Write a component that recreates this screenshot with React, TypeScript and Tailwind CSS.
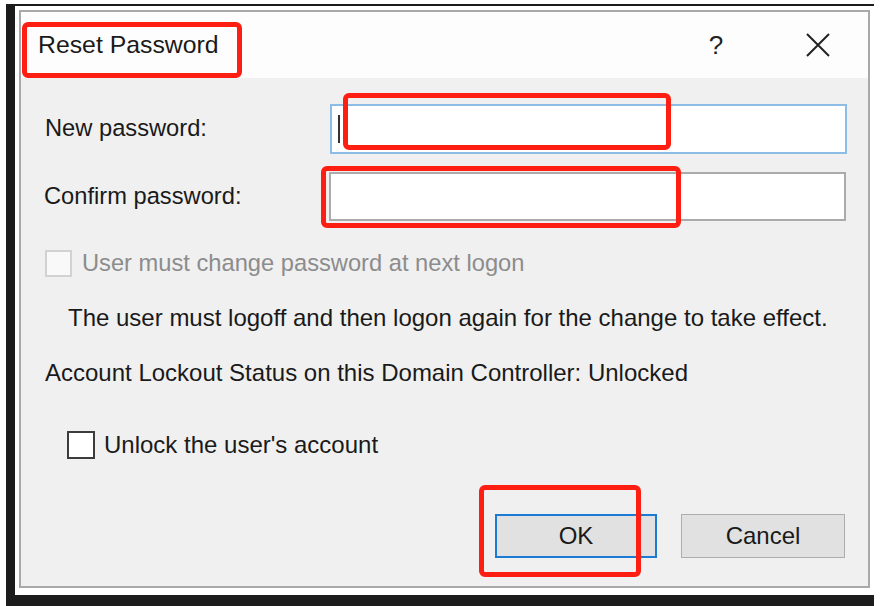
import React from "react";

function CloseIcon() {
  return (
    <svg width="26" height="26" viewBox="0 0 26 26" fill="none">
      <path d="M2 2 L24 24 M24 2 L2 24" stroke="#222" strokeWidth="2" />
    </svg>
  );
}

function RedBox({ className }: { className: string }) {
  return (
    <div
      className={
        "absolute border-[5px] border-[#ff1e12] rounded-[6px] pointer-events-none " +
        className
      }
    />
  );
}

export default function App() {
  return (
    <div
      className="w-[880px] h-[606px] bg-white relative overflow-hidden pl-[6px] pt-[4px] text-[#1a1a1a]"
      style={{ fontFamily: '"Liberation Sans", Arial, sans-serif' }}
    >
      <div className="w-[868px] h-[602px] border-l-[9px] border-t-2 border-b-[11px] border-[#1c1c1c] pl-[4px] pt-[4px]">
        <div className="w-[851px] h-[578px] border-2 border-[#a9a9a9] bg-[#f0f0f0] flex flex-col">
          {/* title bar */}
          <div className="h-[66px] bg-[#fdfdfd] flex items-center pl-[17px] pr-[30px]">
            <span className="text-[24.8px] leading-none">Reset Password</span>
            <div className="flex-1" />
            <span className="w-[30px] text-center text-[26px] leading-none text-[#222]">?</span>
            <div className="w-[40px] ml-[67px] flex justify-center">
              <CloseIcon />
            </div>
          </div>

          {/* body */}
          <div className="flex-1 flex flex-col pl-[24px] pr-[21px] pb-[28px] text-[24px]">
            <div className="flex items-center mt-[26px]">
              <span className="w-[285px] leading-none text-[23.7px]">New password:</span>
              <div className="w-[517px] h-[50px] bg-white border-2 border-[#8dbde6] flex items-center">
                <div className="w-[2px] h-[28px] bg-[#333] ml-[6px]" />
              </div>
            </div>
            <div className="flex items-center mt-[18px]">
              <span className="w-[285px] leading-none -ml-[1px] text-[23.7px]">Confirm password:</span>
              <div className="w-[517px] h-[49px] bg-white border-2 border-[#ababab]" />
            </div>

            <div className="flex items-center mt-[29px] h-[27px]">
              <div className="w-[27px] h-[27px] bg-[#f9f9f9] border-2 border-[#d2d2d2]" />
              <span className="ml-[10px] text-[#8c8c8c] leading-none text-[23.7px]">
                User must change password at next logon
              </span>
            </div>

            <div className="mt-[27px] ml-[23px] leading-[28px]">
              The user must logoff and then logon again for the change to take effect.
            </div>

            <div className="mt-[27px] leading-[28px]">
              Account Lockout Status on this Domain Controller: Unlocked
            </div>

            <div className="flex items-center mt-[44px] ml-[22px] h-[28px]">
              <div className="w-[28px] h-[28px] bg-white border-2 border-[#3c3c3c]" />
              <span className="ml-[9px] leading-none">Unlock the user's account</span>
            </div>

            <div className="mt-auto flex justify-end gap-[24px] pr-[2px]">
              <button className="w-[162px] h-[44px] bg-[#e1e1e1] border-2 border-[#1a7ad4] text-[24px] leading-none text-[#1a1a1a]">
                OK
              </button>
              <button className="w-[164px] h-[44px] bg-[#e1e1e1] border border-[#adadad] text-[24px] leading-none text-[#1a1a1a]">
                Cancel
              </button>
            </div>
          </div>
        </div>
      </div>

      {/* annotation highlights */}
      <RedBox className="left-[22px] top-[22px] w-[220px] h-[56px]" />
      <RedBox className="left-[343px] top-[93px] w-[328px] h-[57px]" />
      <RedBox className="left-[321px] top-[166px] w-[360px] h-[62px]" />
      <RedBox className="left-[479px] top-[485px] w-[162px] h-[92px]" />
    </div>
  );
}
